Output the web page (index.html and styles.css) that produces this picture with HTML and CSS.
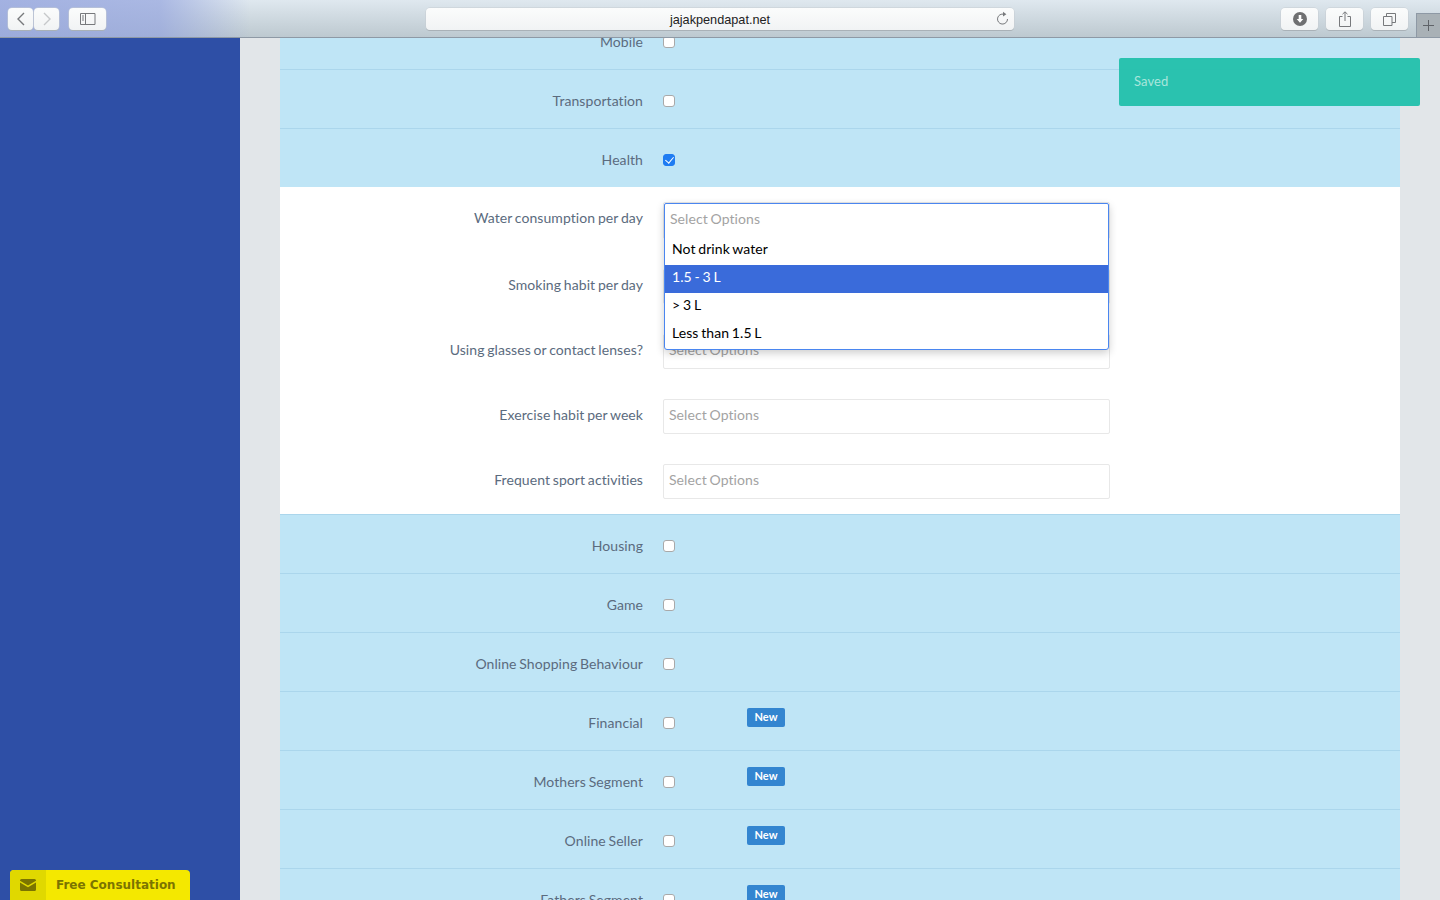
FILE: index.html
```html
<!DOCTYPE html>
<html lang="en">
<head>
    <meta charset="UTF-8">
    <meta name="viewport" content="width=device-width, initial-scale=1.0">
    <title>jajakpendapat.net</title>
    <link rel="stylesheet" href="styles.css">
</head>
<body>
    <div class="browser-bar">
        <div class="bar-left">
            <div class="nav-pair">
                <div class="bar-btn nav-btn">
                    <svg width="10" height="14" viewBox="0 0 10 14"><path d="M8 1 2 7l6 6" fill="none" stroke="#77797c" stroke-width="1.4"/></svg>
                </div>
                <div class="bar-btn nav-btn">
                    <svg width="10" height="14" viewBox="0 0 10 14"><path d="M2 1l6 6-6 6" fill="none" stroke="#c6c8ca" stroke-width="1.4"/></svg>
                </div>
            </div>
            <div class="bar-btn wide-btn">
                <svg width="16" height="12" viewBox="0 0 16 12"><path d="M.5.5h14.500v11H.5zM5.500.5v11" fill="none" stroke="#77797c"/><path d="M2 3h2M2 5h2M2 7h2" stroke="#77797c"/></svg>
            </div>
        </div>
        <div class="url-bar">
            <span>jajakpendapat.net</span>
            <svg class="reload" width="13" height="15" viewBox="0 0 13 15"><path d="M8 3.300A5 5 0 1 0 11.500 8" fill="none" stroke="#77797c" stroke-width="1"/><path d="M7 .800l3.400 2.500L7 5.500z" fill="#77797c"/></svg>
        </div>
        <div class="bar-right">
            <div class="bar-btn wide-btn">
                <svg width="14" height="14" viewBox="0 0 14 14"><circle cx="7" cy="7" r="7" fill="#6f7072"/><path d="M5.700 3h2.600v4h2L7 10.800 3.700 7h2z" fill="#fff"/></svg>
            </div>
            <div class="bar-btn wide-btn">
                <svg width="12" height="16" viewBox="0 0 12 16"><path d="M3.500 5.500H.5v10h11v-10h-3M6 10V1M3.500 3.200 6 .8l2.500 2.400" fill="none" stroke="#77797c"/></svg>
            </div>
            <div class="bar-btn wide-btn">
                <svg width="13" height="13" viewBox="0 0 13 13"><path d="M.5 3.500h8.500v9H.5zM3.500 3.500V.5h9v9H9" fill="none" stroke="#77797c"/></svg>
            </div>
        </div>
        <div class="new-tab">
            <svg width="11" height="11" viewBox="0 0 11 11"><path d="M5.500 0v11M0 5.500h11" stroke="#5f6368"/></svg>
        </div>
    </div>

    <div class="page">
        <div class="sidebar">
            <div class="consult">
                <div class="consult-icon">
                    <svg width="16" height="12" viewBox="0 0 16 12"><path d="M1.500 0h13A1.500 1.500 0 0 1 16 1.500v.3L8 6.500 0 1.800v-.3A1.500 1.500 0 0 1 1.500 0z" fill="#7b7400"/><path d="M0 3.600l8 4.700 8-4.700v6.900a1.500 1.500 0 0 1-1.500 1.500h-13A1.500 1.500 0 0 1 0 10.500z" fill="#7b7400"/></svg>
                </div>
                <div class="consult-text">Free Consultation</div>
            </div>
        </div>

        <div class="main">
            <div class="panel">
                <div class="row"><label>Mobile</label><span class="check-cell"><input type="checkbox"></span></div>
                <div class="row"><label>Transportation</label><span class="check-cell"><input type="checkbox"></span></div>
                <div class="row row-last"><label>Health</label><span class="check-cell"><input type="checkbox" checked></span></div>

                <div class="sub-section">
                    <div class="field-row field-open">
                        <label>Water consumption per day</label>
                        <div class="select-box">
                            Select Options
                            <div class="dropdown">
                                <div class="dropdown-search">Select Options</div>
                                <div class="option">Not drink water</div>
                                <div class="option option-active">1.5 - 3 L</div>
                                <div class="option">&gt; 3 L</div>
                                <div class="option">Less than 1.5 L</div>
                            </div>
                        </div>
                    </div>
                    <div class="field-row"><label>Smoking habit per day</label><div class="select-box">Select Options</div></div>
                    <div class="field-row"><label>Using glasses or contact lenses?</label><div class="select-box">Select Options</div></div>
                    <div class="field-row"><label>Exercise habit per week</label><div class="select-box">Select Options</div></div>
                    <div class="field-row"><label>Frequent sport activities</label><div class="select-box">Select Options</div></div>
                </div>

                <div class="row"><label>Housing</label><span class="check-cell"><input type="checkbox"></span></div>
                <div class="row"><label>Game</label><span class="check-cell"><input type="checkbox"></span></div>
                <div class="row"><label>Online Shopping Behaviour</label><span class="check-cell"><input type="checkbox"></span></div>
                <div class="row"><label>Financial</label><span class="check-cell"><input type="checkbox"></span><span class="badge">New</span></div>
                <div class="row"><label>Mothers Segment</label><span class="check-cell"><input type="checkbox"></span><span class="badge">New</span></div>
                <div class="row"><label>Online Seller</label><span class="check-cell"><input type="checkbox"></span><span class="badge">New</span></div>
                <div class="row"><label>Fathers Segment</label><span class="check-cell"><input type="checkbox"></span><span class="badge">New</span></div>
            </div>
        </div>

        <div class="toast">Saved</div>
    </div>
</body>
</html>
```
FILE: styles.css
```css
* {
    box-sizing: border-box;
}
html, body {
    height: 100%;
}
body {
    margin: 0;
    font-family: Lato, "Open Sans", sans-serif;
    font-size: 14px;
    letter-spacing: .07px;
    word-spacing: -.9px;
    overflow: hidden;
    display: flex;
    flex-direction: column;
}

/* browser toolbar */
.browser-bar {
    position: relative;
    flex: 0 0 38px;
    display: grid;
    grid-template-columns: 426px 588px 426px;
    align-items: start;
    padding-top: 8px;
    border-bottom: 1px solid #8e99a5;
    background:
        linear-gradient(90deg, rgba(148,164,222,.8) 0, rgba(148,164,222,.7) 160px, rgba(148,164,222,0) 250px),
        linear-gradient(180deg, #dfe8ef 0, #bdc9d0 100%);
}
.bar-left {
    display: flex;
    gap: 10px;
    padding-left: 8px;
}
.nav-pair {
    display: flex;
    gap: 1px;
}
.bar-right {
    display: flex;
    justify-content: flex-end;
    gap: 8px;
    padding-right: 32px;
}
.bar-btn {
    height: 22px;
    display: flex;
    align-items: center;
    justify-content: center;
    border-radius: 4px;
    background: linear-gradient(180deg, #fbfcfc, #f1f3f4);
    box-shadow: 0 1px 0 #a9b1b7, 0 0 0 .5px #c6ccd1;
}
.nav-btn {
    width: 25px;
}
.wide-btn {
    width: 37px;
}
.url-bar {
    position: relative;
    height: 22px;
    display: flex;
    align-items: center;
    justify-content: center;
    padding-top: 1px;
    border-radius: 4px;
    background: linear-gradient(180deg, #fbfcfc, #f1f3f4);
    box-shadow: 0 1px 0 #a9b1b7, 0 0 0 .5px #c6ccd1;
    font-family: "Liberation Sans", Arial, sans-serif;
    font-size: 12.7px;
    letter-spacing: 0;
    word-spacing: 0;
    color: #222;
}
.reload {
    position: absolute;
    right: 5px;
    top: 3px;
}
.new-tab {
    position: absolute;
    right: 0;
    bottom: 0;
    width: 24px;
    height: 24px;
    display: flex;
    align-items: center;
    justify-content: center;
    background: #a9b1b6;
    border-left: 1px solid #8e99a5;
    border-top: 1px solid #8e99a5;
}

/* page */
.page {
    position: relative;
    flex: 1;
    display: flex;
    min-height: 0;
    overflow: hidden;
    background: #e2e6e9;
}
.sidebar {
    position: relative;
    flex: 0 0 240px;
    background: #2e4fa6;
}
.consult {
    position: absolute;
    left: 10px;
    bottom: 0;
    width: 180px;
    height: 30px;
    display: flex;
    background: #f4e800;
    border-radius: 4px 4px 0 0;
    overflow: hidden;
    color: #7b7400;
}
.consult-icon {
    flex: 0 0 36px;
    display: flex;
    align-items: center;
    justify-content: center;
    background: #e0d800;
}
.consult-text {
    padding-left: 10px;
    line-height: 30px;
    font-family: "DejaVu Sans", sans-serif;
    font-size: 12px;
    font-weight: bold;
    letter-spacing: 0;
    word-spacing: 0;
    white-space: nowrap;
}
.main {
    flex: 1;
    padding: 0 40px;
    min-width: 0;
}
.panel {
    margin-top: -27px;
    background: #bfe5f6;
}

/* rows */
.row {
    height: 59px;
    display: flex;
    border-bottom: 1px solid #abd6ec;
    color: #5b6b7e;
}
.row-last {
    border-bottom: 0;
    height: 58px;
}
.row label {
    flex: 0 0 363px;
    margin-right: 20px;
    padding-top: 22px;
    line-height: 17px;
    text-align: right;
    color: #5b6b7e;
}
.check-cell {
    flex: 0 0 84px;
    padding-top: 25px;
}
.check-cell input {
    appearance: none;
    display: block;
    position: relative;
    width: 12px;
    height: 12px;
    margin: 0;
    background: #fff;
    border: 1px solid #a9a9a9;
    border-radius: 3px;
}
.check-cell input:checked {
    background: #1f7cf2;
    border-color: #1f7cf2;
}
.check-cell input:checked::after {
    content: "";
    position: absolute;
    left: 3px;
    top: 0;
    width: 4px;
    height: 7px;
    border: solid #fff;
    border-width: 0 1.5px 1.5px 0;
    transform: rotate(40deg);
}
.badge {
    align-self: flex-start;
    margin-top: 16px;
    width: 38px;
    height: 19px;
    line-height: 18px;
    text-align: center;
    color: #fff;
    background: #3385d0;
    border-radius: 2px;
    font-size: 11px;
    font-weight: bold;
    letter-spacing: 0;
}

/* white block of select fields */
.sub-section {
    height: 328px;
    padding: 15px 0 0;
    background: #fff;
    border-bottom: 1px solid #abd6ec;
    display: flex;
    flex-direction: column;
    gap: 30px;
}
.field-row {
    display: flex;
    height: 35px;
}
.field-open {
    height: 37px;
}
.field-row label {
    flex: 0 0 363px;
    margin-right: 20px;
    padding-top: 7px;
    line-height: 17px;
    text-align: right;
    color: #5b6b7e;
}
.select-box {
    position: relative;
    flex: 0 0 447px;
    height: 100%;
    padding: 0 5px;
    line-height: 29px;
    color: #a3a3a3;
    background: #fff;
    border: 1px solid #e8e8e8;
    border-radius: 2px;
}
.dropdown {
    position: absolute;
    left: 0;
    top: 0;
    width: 445px;
    height: 147px;
    background: #fff;
    border: 1px solid #4a86f0;
    border-radius: 2px 2px 3px 3px;
    box-shadow: 0 3px 8px rgba(0,0,0,.2);
    z-index: 2;
}
.dropdown-search {
    height: 33px;
    padding-left: 5px;
    line-height: 30px;
    color: #a3a3a3;
}
.option {
    height: 28px;
    padding-left: 7px;
    line-height: 24px;
    color: #000;
}
.option-active {
    background: #3a6bda;
    color: #fff;
}

/* saved message */
.toast {
    position: absolute;
    left: 1119px;
    top: 20px;
    width: 301px;
    height: 48px;
    padding-left: 15px;
    line-height: 46px;
    font-size: 13px;
    color: #a8e6dc;
    background: rgba(37,192,172,.97);
    border-radius: 2px;
    z-index: 5;
}
```
